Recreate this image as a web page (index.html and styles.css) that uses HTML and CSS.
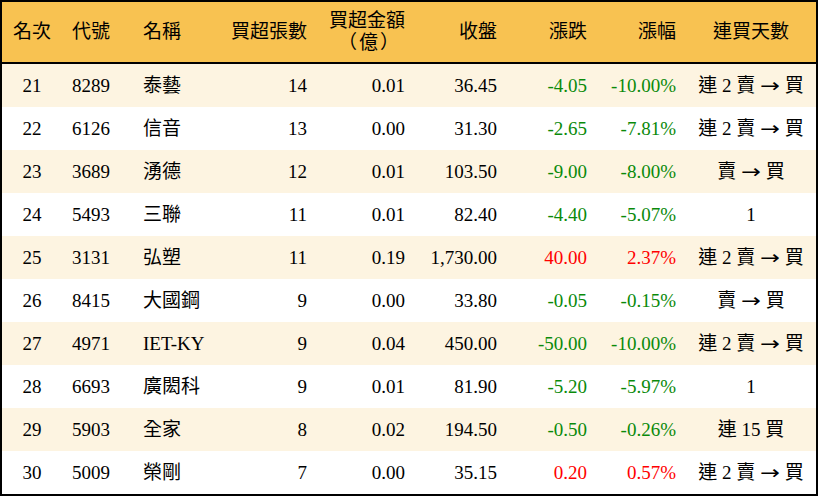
FILE: index.html
```html
<!DOCTYPE html>
<html lang="zh-Hant">
<head>
<meta charset="utf-8">
<title>買超排行</title>
<link rel="stylesheet" href="styles.css">
</head>
<body>
<div class="frame">
<table class="rank">
<colgroup>
<col class="c-rank"><col class="c-code"><col class="c-name"><col class="c-vol"><col class="c-amt"><col class="c-close"><col class="c-chg"><col class="c-pct"><col class="c-days">
</colgroup>
<thead>
<tr>
<th class="ctr">名次</th>
<th class="lft">代號</th>
<th class="lft">名稱</th>
<th class="rgt">買超張數</th>
<th class="rgt two">買超金額<span class="sub">（億）</span></th>
<th class="rgt">收盤</th>
<th class="rgt">漲跌</th>
<th class="rgt">漲幅</th>
<th class="ctr">連買天數</th>
</tr>
</thead>
<tbody>
<tr class="odd"><td class="ctr">21</td><td class="lft">8289</td><td class="lft">泰藝</td><td class="rgt">14</td><td class="rgt">0.01</td><td class="rgt">36.45</td><td class="rgt dn">-4.05</td><td class="rgt dn">-10.00%</td><td class="ctr">連 2 賣 <span class="arrow">→</span> 買</td></tr>
<tr><td class="ctr">22</td><td class="lft">6126</td><td class="lft">信音</td><td class="rgt">13</td><td class="rgt">0.00</td><td class="rgt">31.30</td><td class="rgt dn">-2.65</td><td class="rgt dn">-7.81%</td><td class="ctr">連 2 賣 <span class="arrow">→</span> 買</td></tr>
<tr class="odd"><td class="ctr">23</td><td class="lft">3689</td><td class="lft">湧德</td><td class="rgt">12</td><td class="rgt">0.01</td><td class="rgt">103.50</td><td class="rgt dn">-9.00</td><td class="rgt dn">-8.00%</td><td class="ctr">賣 <span class="arrow">→</span> 買</td></tr>
<tr><td class="ctr">24</td><td class="lft">5493</td><td class="lft">三聯</td><td class="rgt">11</td><td class="rgt">0.01</td><td class="rgt">82.40</td><td class="rgt dn">-4.40</td><td class="rgt dn">-5.07%</td><td class="ctr">1</td></tr>
<tr class="odd"><td class="ctr">25</td><td class="lft">3131</td><td class="lft">弘塑</td><td class="rgt">11</td><td class="rgt">0.19</td><td class="rgt">1,730.00</td><td class="rgt up">40.00</td><td class="rgt up">2.37%</td><td class="ctr">連 2 賣 <span class="arrow">→</span> 買</td></tr>
<tr><td class="ctr">26</td><td class="lft">8415</td><td class="lft">大國鋼</td><td class="rgt">9</td><td class="rgt">0.00</td><td class="rgt">33.80</td><td class="rgt dn">-0.05</td><td class="rgt dn">-0.15%</td><td class="ctr">賣 <span class="arrow">→</span> 買</td></tr>
<tr class="odd"><td class="ctr">27</td><td class="lft">4971</td><td class="lft">IET-KY</td><td class="rgt">9</td><td class="rgt">0.04</td><td class="rgt">450.00</td><td class="rgt dn">-50.00</td><td class="rgt dn">-10.00%</td><td class="ctr">連 2 賣 <span class="arrow">→</span> 買</td></tr>
<tr><td class="ctr">28</td><td class="lft">6693</td><td class="lft">廣閎科</td><td class="rgt">9</td><td class="rgt">0.01</td><td class="rgt">81.90</td><td class="rgt dn">-5.20</td><td class="rgt dn">-5.97%</td><td class="ctr">1</td></tr>
<tr class="odd"><td class="ctr">29</td><td class="lft">5903</td><td class="lft">全家</td><td class="rgt">8</td><td class="rgt">0.02</td><td class="rgt">194.50</td><td class="rgt dn">-0.50</td><td class="rgt dn">-0.26%</td><td class="ctr">連 15 買</td></tr>
<tr><td class="ctr">30</td><td class="lft">5009</td><td class="lft">榮剛</td><td class="rgt">7</td><td class="rgt">0.00</td><td class="rgt">35.15</td><td class="rgt up">0.20</td><td class="rgt up">0.57%</td><td class="ctr">連 2 賣 <span class="arrow">→</span> 買</td></tr>
</tbody>
</table>
</div>
</body>
</html>
```

FILE: styles.css
```css
html, body {
  margin: 0;
  padding: 0;
  background: #ffffff;
}

.frame {
  width: 814px;
  height: 492px;
  border: 2px solid #000000;
  overflow: hidden;
  background: #ffffff;
}

.rank {
  width: 814px;
  table-layout: fixed;
  border-collapse: separate;
  border-spacing: 0;
  font-family: "Liberation Serif", "Noto Sans CJK TC", serif;
  font-size: 19px;
  color: #000000;
}

.c-rank { width: 60px; }
.c-code { width: 71px; }
.c-name { width: 86px; }
.c-vol { width: 98px; }
.c-amt { width: 98px; }
.c-close { width: 92px; }
.c-chg { width: 90px; }
.c-pct { width: 89px; }
.c-days { width: 130px; }

.rank th {
  background: #f8c251;
  font-weight: normal;
  height: 60px;
  padding: 0 10px;
  border-bottom: 2px solid #000000;
  line-height: 22px;
  box-sizing: border-box;
  vertical-align: middle;
  white-space: nowrap;
}

.rank thead tr {
  height: 62px;
}

.rank th.two {
  padding-top: 0;
}

.rank th .sub {
  display: block;
  font-family: "Liberation Serif", "Noto Sans CJK JP", sans-serif;
  letter-spacing: 2px;
  padding-right: 4px;
}

.rank td {
  height: 43px;
  padding: 0 10px;
  box-sizing: border-box;
  vertical-align: middle;
  white-space: nowrap;
  line-height: 22px;
}

.rank tr.odd td {
  background: #fdf4e1;
}

.arrow {
  font-family: "DejaVu Sans", sans-serif;
  font-size: 19px;
  display: inline-block;
  transform: scaleX(1.25);
  margin: 0 2px;
}

.ctr { text-align: center; }
.lft { text-align: left; }
.rgt { text-align: right; }

.dn { color: #0a8a0a; }
.up { color: #ff0000; }
```
